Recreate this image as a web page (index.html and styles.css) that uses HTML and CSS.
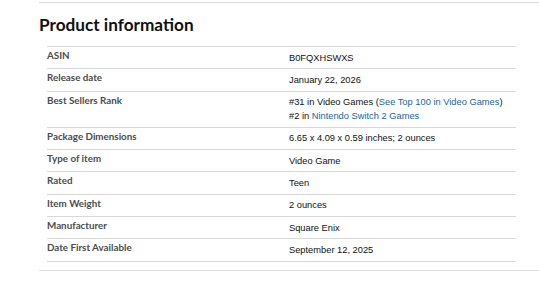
FILE: index.html
```html
<!DOCTYPE html>
<html>
<head>
<meta charset="utf-8">
<link rel="stylesheet" href="styles.css">
</head>
<body>
<div class="section">
  <div class="rule"></div>
  <h2 class="title">Product information</h2>
  <div class="table">
    <div class="row"><div class="label">ASIN</div><div class="value">B0FQXHSWXS</div></div>
    <div class="row"><div class="label">Release date</div><div class="value">January 22, 2026</div></div>
    <div class="row"><div class="label">Best Sellers Rank</div><div class="value">#31 in Video Games (<a class="link">See Top 100 in Video Games</a>)<br>#2 in <a class="link">Nintendo Switch 2 Games</a></div></div>
    <div class="row"><div class="label">Package Dimensions</div><div class="value">6.65 x 4.09 x 0.59 inches; 2 ounces</div></div>
    <div class="row"><div class="label">Type of item</div><div class="value">Video Game</div></div>
    <div class="row"><div class="label">Rated</div><div class="value">Teen</div></div>
    <div class="row"><div class="label">Item Weight</div><div class="value">2 ounces</div></div>
    <div class="row"><div class="label">Manufacturer</div><div class="value">Square Enix</div></div>
    <div class="row last"><div class="label">Date First Available</div><div class="value">September 12, 2025</div></div>
  </div>
  <div class="rule bottom"></div>
</div>
</body>
</html>
```
FILE: styles.css
```css
html, body { margin: 0; padding: 0; background: #fff; }
body { color: #0f1111; }
.section { padding: 2px 0 0 39px; }
.rule { height: 1px; background: #dddddd; }
.rule.bottom { margin-top: 8px; }
.title {
  margin: 0;
  padding-top: 12px;
  height: 43px;
  box-sizing: border-box;
  font-family: Lato, "Open Sans", sans-serif;
  font-weight: 700;
  font-size: 17.2px;
  line-height: 20px;
  color: #0f1111;
}
.table { margin-left: 8px; width: 469px; }
.row {
  display: grid;
  grid-template-columns: 242px 1fr;
  border-top: 1px solid #d5d9d9;
  padding: 3.5px 0 3.8px;
}
.row.last { border-bottom: 1px solid #d5d9d9; }
.label {
  font-family: Lato, "Open Sans", sans-serif;
  font-weight: 700;
  font-size: 9.8px;
  line-height: 14px;
  color: #4a4d4d;
  margin-top: -2.5px;
}
.value {
  font-family: "Liberation Sans", Arial, sans-serif;
  font-size: 9.3px;
  line-height: 14px;
  color: #0f1111;
}
.link { color: #2162a1; text-decoration: none; }
```
